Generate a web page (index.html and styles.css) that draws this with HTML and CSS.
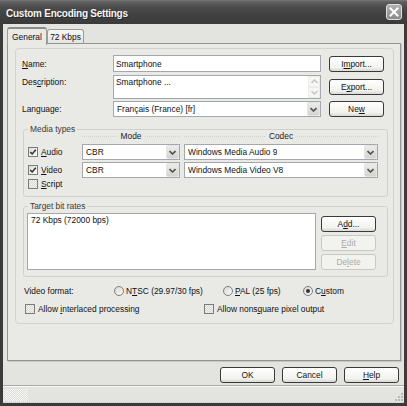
FILE: index.html
```html
<!DOCTYPE html>
<html lang="en">
<head>
<meta charset="utf-8">
<title>Custom Encoding Settings</title>
<link rel="stylesheet" href="styles.css">
</head>
<body>
<div class="window">
  <div class="titlebar">
    <span class="title">Custom Encoding Settings</span>
    <span class="close"><svg width="10" height="10" viewBox="0 0 10 10"><path d="M1.5 1.5 L8.5 8.5 M8.5 1.5 L1.5 8.5" stroke="#fff" stroke-width="2" stroke-linecap="square"/></svg></span>
  </div>
  <div class="client">
    <div class="tabs">
      <div class="tab active"><span class="t">General</span></div>
      <div class="tab"><span class="t">72 Kbps</span></div>
    </div>
    <div class="panel">
      <div class="inner">
        <div class="row r-name">
          <span class="lbl"><u>N</u>ame:</span>
          <span class="field input">Smartphone</span>
          <span class="btn side"><span class="t">I<u>m</u>port...</span></span>
        </div>
        <div class="row r-desc">
          <span class="lbl desc-lbl">Des<u>c</u>ription:</span>
          <span class="field textarea">
            <span class="ta-text">Smartphone ...</span>
            <span class="vscroll">
              <span class="sbtn"><svg width="7" height="5" viewBox="0 0 7 5"><path d="M0.5 4 L3.5 1 L6.5 4" fill="none" stroke="#c4c4c2" stroke-width="1.5"/></svg></span>
              <span class="sbtn"><svg width="7" height="5" viewBox="0 0 7 5"><path d="M0.5 1 L3.5 4 L6.5 1" fill="none" stroke="#c4c4c2" stroke-width="1.5"/></svg></span>
            </span>
          </span>
          <span class="btn side"><span class="t">E<u>x</u>port...</span></span>
        </div>
        <div class="row r-lang">
          <span class="lbl">Language:</span>
          <span class="field select"><span class="sel-text">Français (France) [fr]</span><span class="drop"><svg width="7" height="5" viewBox="0 0 7 5"><path d="M0.5 1 L3.5 4 L6.5 1" fill="none" stroke="#505050" stroke-width="1.6"/></svg></span></span>
          <span class="btn side"><span class="t">Ne<u>w</u></span></span>
        </div>

        <fieldset class="group media">
          <legend>Media types</legend>
          <div class="mrow mhead">
            <span class="c1"></span>
            <span class="c2 colhead"><span class="hl">Mode</span></span>
            <span class="c3 colhead"><span class="hl">Codec</span></span>
          </div>
          <div class="mrow mline">
            <span class="c1 chk"><span class="box"><svg width="8" height="8" viewBox="0 0 8 8"><path d="M1.2 4 L3.2 6 L6.8 1.8" fill="none" stroke="#2e2e2e" stroke-width="1.5"/></svg></span><span class="t"><u>A</u>udio</span></span>
            <span class="c2 field select"><span class="sel-text">CBR</span><span class="drop"><svg width="7" height="5" viewBox="0 0 7 5"><path d="M0.5 1 L3.5 4 L6.5 1" fill="none" stroke="#505050" stroke-width="1.6"/></svg></span></span>
            <span class="c3 field select"><span class="sel-text">Windows Media Audio 9</span><span class="drop"><svg width="7" height="5" viewBox="0 0 7 5"><path d="M0.5 1 L3.5 4 L6.5 1" fill="none" stroke="#505050" stroke-width="1.6"/></svg></span></span>
          </div>
          <div class="mrow mline second">
            <span class="c1 chk"><span class="box"><svg width="8" height="8" viewBox="0 0 8 8"><path d="M1.2 4 L3.2 6 L6.8 1.8" fill="none" stroke="#2e2e2e" stroke-width="1.5"/></svg></span><span class="t"><u>V</u>ideo</span></span>
            <span class="c2 field select"><span class="sel-text">CBR</span><span class="drop"><svg width="7" height="5" viewBox="0 0 7 5"><path d="M0.5 1 L3.5 4 L6.5 1" fill="none" stroke="#505050" stroke-width="1.6"/></svg></span></span>
            <span class="c3 field select"><span class="sel-text">Windows Media Video V8</span><span class="drop"><svg width="7" height="5" viewBox="0 0 7 5"><path d="M0.5 1 L3.5 4 L6.5 1" fill="none" stroke="#505050" stroke-width="1.6"/></svg></span></span>
          </div>
          <div class="mrow mscript">
            <span class="c1 chk"><span class="box off"></span><span class="t"><u>S</u>cript</span></span>
          </div>
        </fieldset>

        <fieldset class="group rates">
          <legend>Target bit rates</legend>
          <div class="rates-body">
            <div class="listbox">72 Kbps (72000 bps)</div>
            <div class="rate-btns">
              <span class="btn"><span class="t">A<u>d</u>d...</span></span>
              <span class="btn disabled"><span class="t"><u>E</u>dit</span></span>
              <span class="btn disabled"><span class="t">De<u>l</u>ete</span></span>
            </div>
          </div>
        </fieldset>

        <div class="vf-row">
          <span class="vf-lbl">Video format:</span>
          <span class="ritem ntsc"><span class="radio"></span><span class="t">N<u>T</u>SC (29.97/30 fps)</span></span>
          <span class="ritem pal"><span class="radio"></span><span class="t"><u>P</u>AL (25 fps)</span></span>
          <span class="ritem"><span class="radio on"></span><span class="t">C<u>u</u>stom</span></span>
        </div>
        <div class="allow-row">
          <span class="chk a1"><span class="box off"></span><span class="t">Allow <u>i</u>nterlaced processing</span></span>
          <span class="chk"><span class="box off"></span><span class="t">Allow nons<u>q</u>uare pixel output</span></span>
        </div>
      </div>
    </div>
    <div class="dlg-btns">
      <span class="btn"><span class="t">OK</span></span>
      <span class="btn"><span class="t">Cancel</span></span>
      <span class="btn"><span class="t"><u>H</u>elp</span></span>
    </div>
    <div class="sep"></div>
    <div class="status">
      <span class="pane"></span>
      <span class="grip"><svg width="11" height="11" viewBox="0 0 11 11"><g fill="#b8b8b4"><rect x="8" y="2" width="2" height="2"/><rect x="5" y="5" width="2" height="2"/><rect x="8" y="5" width="2" height="2"/><rect x="2" y="8" width="2" height="2"/><rect x="5" y="8" width="2" height="2"/><rect x="8" y="8" width="2" height="2"/></g></svg></span>
    </div>
  </div>
</div>
</body>
</html>
```

FILE: styles.css
```css
* { box-sizing: border-box; }
html, body { margin: 0; padding: 0; }
body {
  width: 407px;
  height: 406px;
  overflow: hidden;
  background: #3a3a3a;
  font-family: "Liberation Sans", Arial, sans-serif;
  font-size: 8.4px;
  line-height: 10px;
  color: #000;
}
u { text-decoration: underline; text-underline-offset: 1px; }
.t { white-space: nowrap; }

.window {
  width: 407px;
  height: 406px;
  background: #3b3b3b;
  display: flex;
  flex-direction: column;
}

/* title bar */
.titlebar {
  height: 24px;
  flex: none;
  display: flex;
  align-items: center;
  justify-content: space-between;
  padding: 0 5px 0 6px;
  background: linear-gradient(#7a7a7a 0, #5e5e5e 2px, #4a4a4a 8px, #404040 16px, #3a3a3a 100%);
}
.title {
  color: #f4f4f4;
  font-weight: bold;
  font-size: 10px;
  letter-spacing: -0.25px;
  line-height: 12px;
  padding-top: 3px;
  text-shadow: 1px 1px 0 #2a2a2a;
}
.close {
  width: 16px;
  height: 16px;
  border: 1px solid #e0e0e0;
  border-radius: 3px;
  background: linear-gradient(#b0b0b0, #8a8a8a);
  display: flex;
  align-items: center;
  justify-content: center;
}

/* client area */
.client {
  flex: none;
  height: 379px;
  margin: 0 3px;
  background: #e3e3df;
  display: flex;
  flex-direction: column;
}

.tabs {
  height: 19px;
  padding: 3px 0 0 4px;
  display: flex;
  align-items: flex-start;
}
.tab {
  height: 14px;
  margin-top: 2px;
  border: 1px solid #9c9c9a;
  border-bottom: none;
  border-radius: 3px 3px 0 0;
  background: linear-gradient(#f6f6f4, #e4e4e0);
  display: flex;
  align-items: center;
  justify-content: center;
  width: 37px;
  color: #111;
}
.tab.active {
  width: 40px;
  height: 18px;
  margin-top: 0;
  border-top: 2px solid #8c8c8c;
  background: #e9e9e6;
  position: relative;
  z-index: 1;
  padding-bottom: 1px;
}

.panel {
  height: 318px;
  margin: 0 3px 0 4px;
  border: 1px solid #949492;
  background: #e9e9e6;
  box-shadow: 1px 1px 0 #c6c6c2;
  padding: 4px 0 0 7px;
}
.inner {
  width: 379px;
  height: 276px;
  border: 1px solid #d2d2ce;
  border-radius: 4px;
}

/* top rows */
.row {
  display: flex;
  align-items: center;
  padding-left: 6px;
}
.r-name { margin-top: 6px; height: 17px; }
.r-desc { margin-top: 3px; height: 24px; align-items: center; }
.r-lang { margin-top: 2px; height: 16px; }
.lbl { width: 91px; flex: none; color: #111; }
.desc-lbl { align-self: flex-start; padding-top: 2px; }

.field {
  border: 1px solid #a4a8ac;
  background: #fff;
  display: flex;
  align-items: center;
  color: #111;
}
.row .field { width: 208px; flex: none; }
.input { height: 17px; padding-left: 2px; }
.textarea { height: 24px; align-items: flex-start; padding-left: 2px; justify-content: space-between; }
.ta-text { padding-top: 1px; }
.vscroll { display: flex; flex-direction: column; width: 12px; height: 22px; }
.sbtn {
  flex: 1;
  border: 1px solid #ecece8;
  background: #f6f6f4;
  display: flex;
  align-items: center;
  justify-content: center;
}

.select { height: 16px; padding-left: 3px; justify-content: space-between; }
.sel-text { white-space: nowrap; overflow: hidden; }
.drop {
  width: 13px;
  height: 14px;
  flex: none;
  border: 1px solid #e4e4e2;
  border-radius: 2px;
  background: linear-gradient(#ececea, #d4d4d0);
  display: flex;
  align-items: center;
  justify-content: center;
}

.btn {
  height: 16px;
  width: 55px;
  flex: none;
  border: 1px solid #3a3a3a;
  border-radius: 3px;
  background: linear-gradient(#ffffff, #f2f2ee 75%, #d8d8d4);
  display: flex;
  align-items: center;
  justify-content: center;
  color: #111;
}
.btn.side { margin-left: 8px; }
.btn.disabled {
  border-color: #c8c8c4;
  background: #f2f2ee;
  color: #acaca8;
}

/* group boxes */
.group {
  margin: 0 0 0 7px;
  width: 365px;
  min-inline-size: 0;
  padding: 0 0 7px 0;
  border: 1px solid #d0d0cc;
  border-radius: 3px;
}
.group legend {
  padding: 0 2px;
  margin-left: 4px;
  line-height: 10px;
  color: #3a3a3a;
}
.media { margin-top: 7px; }
.rates { margin-top: 4px; padding-bottom: 6px; }

.mrow {
  display: flex;
  gap: 4px;
  padding-left: 4px;
  align-items: center;
}
.c1 { width: 50px; flex: none; }
.c2 { width: 98px; flex: none; }
.c3 { width: 194px; flex: none; }
.mhead { margin-top: -2px; height: 9px; line-height: 9px; }
.colhead {
  display: flex;
  align-items: center;
  gap: 4px;
  color: #222;
}
.colhead::before, .colhead::after {
  content: "";
  flex: 1;
  border-top: 1px dotted #cfcfcb;
}
.mline { margin-top: 3px; height: 16px; }
.mline.second { margin-top: 2px; }
.mscript { margin-top: 1px; height: 10px; }

.chk {
  display: flex;
  align-items: center;
  gap: 3px;
  color: #111;
  white-space: nowrap;
}
.box {
  width: 10px;
  height: 10px;
  flex: none;
  border: 1px solid #7c7c7c;
  background: linear-gradient(135deg, #dcdcd8, #fafafa);
  display: flex;
  align-items: center;
  justify-content: center;
}
.box.off {
  background: repeating-conic-gradient(#d6d6d2 0 25%, #f4f4f2 0 50%) 0 0 / 2px 2px;
}

.rates-body {
  display: flex;
  align-items: flex-start;
  margin-top: 2px;
  padding-left: 3px;
}
.listbox {
  width: 289px;
  height: 57px;
  border: 1px solid #a4a8ac;
  background: #fff;
  padding: 1px 0 0 3px;
  line-height: 11px;
  color: #111;
}
.rate-btns {
  display: flex;
  flex-direction: column;
  gap: 3px;
  margin-left: 5px;
  margin-top: 3px;
}

.vf-row {
  display: flex;
  align-items: center;
  height: 10px;
  margin-top: 9px;
  padding-left: 8px;
  color: #111;
}
.vf-lbl { width: 90px; flex: none; }
.ritem { display: flex; align-items: center; gap: 2px; white-space: nowrap; flex: none; }
.ntsc { width: 109px; }
.pal { width: 80px; }
.radio {
  width: 10px;
  height: 10px;
  flex: none;
  border: 1px solid #7e7e7e;
  border-radius: 50%;
  background: linear-gradient(135deg, #d8d8d4, #fafafa);
  display: flex;
  align-items: center;
  justify-content: center;
}
.radio.on::after {
  content: "";
  width: 4px;
  height: 4px;
  border-radius: 50%;
  background: #333;
}

.allow-row {
  display: flex;
  align-items: center;
  height: 10px;
  margin-top: 8px;
  padding-left: 9px;
}
.allow-row .a1 { width: 179px; flex: none; }

/* bottom */
.dlg-btns {
  display: flex;
  justify-content: flex-end;
  gap: 7px;
  height: 16px;
  margin-top: 6px;
  padding-right: 5px;
}
.sep {
  height: 2px;
  margin-top: 2px;
  border-top: 1px solid #a8a8a4;
  border-bottom: 1px solid #fafafa;
}
.status {
  height: 16px;
  display: flex;
  align-items: flex-start;
  justify-content: space-between;
  border-bottom: 1px dotted #cacac6;
}
.pane {
  width: 24px;
  height: 12px;
  margin: 2px 0 0 1px;
  background: repeating-conic-gradient(#f8f8f6 0 25%, #dcdcd8 0 50%) 0 0 / 2px 2px;
}
.grip { align-self: flex-end; width: 11px; height: 11px; display: flex; }
```
